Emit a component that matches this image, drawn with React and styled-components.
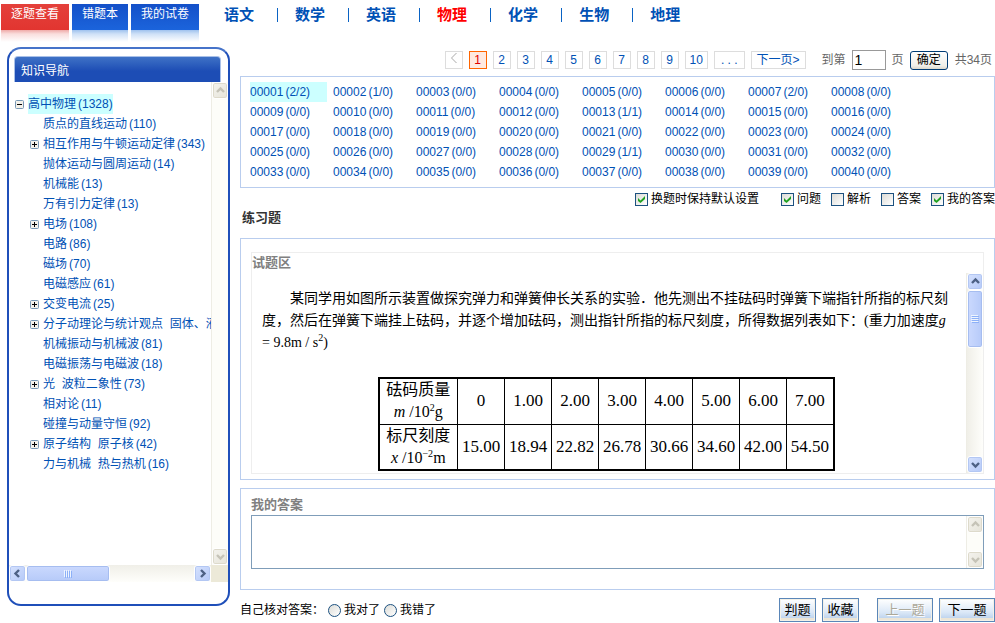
import { useState } from 'react';
import styled, { createGlobalStyle, css } from 'styled-components';

const GlobalStyle = createGlobalStyle`
  * {
    box-sizing: border-box;
  }

  body {
    margin: 0;
    background: #fff;
    color: #000;
    font-family: 'Liberation Sans', 'Noto Sans CJK SC', sans-serif;
    font-size: 12px;
    line-height: 20px;
  }

  a {
    color: #0051b5;
    text-decoration: none;
  }

  button, input, textarea {
    margin: 0;
    font: inherit;
  }
`;

const Header = styled.header`
  display: flex;
  height: 47px;
  padding: 4px 0 0 1px;
`;

const Tabs = styled.nav`
  display: flex;
  gap: 3px;
`;

const Tab = styled.a`
  height: 38px;
  padding: 0 10px;
  color: #fff;
  line-height: 20px;
  white-space: nowrap;
  background: ${props =>
    props.$active
      ? 'linear-gradient(#e4403b, #e23530 26px, #efaaa8 26px, #f9dedd 30px, #fff)'
      : 'linear-gradient(#1450c8, #1b64dc 26px, #9fc2ee 26px, #cfe1f7 30px, #fff)'};
`;

const Subjects = styled.ul`
  display: flex;
  gap: 17px;
  margin: 4px 0 0 25px;
  padding: 0;
  list-style: none;
`;

const Subject = styled.li`
  height: 14px;
  padding-right: 23px;
  border-right: 1px solid #0a63c4;
  font-size: 15px;
  font-weight: bold;
  line-height: 14px;

  &:last-child {
    border-right: 0;
  }

  a {
    color: ${props => (props.$active ? '#f00' : '#0051b5')};
  }
`;

const Body = styled.div`
  display: flex;
  align-items: flex-start;
  gap: 10px;
  padding-left: 7px;
`;

const Sidebar = styled.aside`
  flex: 0 0 223px;
  padding: 7px 0 22px;
  border: 2px solid #1f4fb9;
  border-top-color: #4673c9;
  border-radius: 14px;
`;

const SidebarTitle = styled.h2`
  height: 26px;
  margin: 0 7px 0 5px;
  padding: 4px 0 0 6px;
  border: 1px solid #a9c0e8;
  border-width: 1px 1px 0;
  border-radius: 4px 4px 0 0;
  background: linear-gradient(#3f72c6, #1d4db5 14px);
  color: #fff;
  font-size: 12px;
  font-weight: normal;
`;

const TreePane = styled.div`
  display: grid;
  grid-template-columns: minmax(0, 1fr) 17px;
  grid-template-rows: 483px 17px;
`;

const Corner = styled.div`
  background: #ece9d8;
`;

const Tree = styled.ul`
  margin: 0;
  padding: 12px 0 0 6px;
  overflow: hidden;
  list-style: none;
  white-space: pre;
`;

const Node = styled.li`
  display: flex;
  align-items: center;
  height: 20px;
  padding-left: ${props => (props.$root ? 0 : 15)}px;
`;

const NodeLink = styled.a`
  margin-left: ${props => (props.$indent ? 13 : 4)}px;
  background: ${props => (props.$current ? '#cff' : 'none')};
`;

const Toggle = styled.button`
  display: flex;
  flex: none;
  width: 9px;
  height: 9px;
  padding: 0;
  border: 0;
  background: none;
`;

const Count = styled.span`
  margin-left: 2px;
`;

const Track = styled.div`
  display: flex;
  flex: none;
  ${props =>
    props.$horizontal
      ? css`
          height: 17px;
          background: linear-gradient(#f0efe8, #fefefb);
        `
      : css`
          flex-direction: column;
          width: 17px;
          border-left: 1px solid #eeede5;
          background: ${props.$disabled ? '#fdfdf9' : 'linear-gradient(90deg, #f0efe8, #fefefb)'};
        `}
`;

const ArrowButton = styled.button`
  display: flex;
  flex: none;
  align-items: center;
  justify-content: center;
  width: ${props => (props.$horizontal ? 17 : 16)}px;
  height: 17px;
  padding: 0;
  border: 1px solid #fff;
  border-radius: 3px;
  background: linear-gradient(135deg, #d6e2fe, #b5c9f8);
  box-shadow: inset 0 0 0 1px #b3c7f3;
  color: #4d6185;

  &:disabled {
    background: linear-gradient(135deg, #f4f3ee, #e6e4d9);
    box-shadow: inset 0 0 0 1px #dddacb;
    color: #c5c3b7;
  }

  &:last-child {
    margin: ${props => (props.$horizontal ? '0 0 0 auto' : 'auto 0 0')};
  }
`;

const Thumb = styled.div`
  display: flex;
  align-items: center;
  justify-content: center;
  width: ${props => (props.$horizontal ? 84 : 16)}px;
  height: ${props => (props.$horizontal ? 17 : 58)}px;
  border: 1px solid #fff;
  border-radius: 3px;
  background: linear-gradient(${props => (props.$horizontal ? '180deg' : '90deg')}, #cbd9fe, #b6caf9);
  box-shadow: inset 0 0 0 1px #a6bdf0;
`;

const Main = styled.main`
  flex: 1;
  min-width: 0;
`;

const Pager = styled.form`
  display: flex;
  align-items: center;
  justify-content: flex-end;
  gap: 6px;
  height: 26px;
  margin-bottom: 3px;
  padding-right: 3px;
  color: #666;
  white-space: nowrap;
`;

const PageLink = styled.a`
  min-width: 18px;
  height: 18px;
  padding: 0 ${props => (props.$wide ? 6 : 4)}px;
  border: 1px solid ${props => (props.$current ? '#ff6500' : '#ddd')};
  background: ${props => (props.$current ? '#ffeae1' : '#fff')};
  color: ${props => (props.$current ? '#e00000' : '#0051b5')};
  line-height: 16px;
  text-align: center;
`;

const PrevLink = styled(PageLink)`
  color: #aaa;
`;

const NextLink = styled(PageLink)`
  padding: 0 5px;
`;

const Jump = styled.label`
  display: flex;
  align-items: center;
  gap: 6px;
  margin-left: 10px;
`;

const PageInput = styled.input`
  width: 34px;
  height: 20px;
  padding: 0 2px;
  border: 1px solid #999;
  font-size: 14px;
`;

const GoButton = styled.button`
  height: 19px;
  padding: 0 6px;
  border: 1px solid #003c74;
  border-radius: 3px;
  background: linear-gradient(#fff, #f0efe9 80%, #dcd8cc);
  color: #000;
  line-height: 16px;
`;

const Total = styled.span`
  margin-left: 1px;
`;

const Panel = styled.section`
  border: 1px solid #b9cdee;
`;

const NumberPanel = styled(Panel)`
  display: grid;
  grid-template-columns: repeat(auto-fill, 83px);
  padding: 5px 9px;
`;

const NumberLink = styled.a`
  width: 77px;
  background: ${props => (props.$current ? '#cff' : 'none')};
`;

const Options = styled.div`
  display: flex;
  align-items: center;
  justify-content: flex-end;
  gap: 10px;
  height: 22px;
`;

const Option = styled.label`
  display: flex;
  align-items: center;
  gap: 3px;
  white-space: nowrap;
`;

const Remember = styled(Option)`
  margin-right: 12px;
`;

const Check = styled.input`
  appearance: none;
  width: 13px;
  height: 13px;
  border: 1px solid #1c5180;
  background: linear-gradient(135deg, #dcdcd7, #fff);

  &:checked {
    background:
      url("data:image/svg+xml,%3Csvg xmlns='http://www.w3.org/2000/svg' width='7' height='7'%3E%3Cpath d='M0 2l2.500 2.500L7 0v3L2.500 7 0 5z' fill='%2321a121'/%3E%3C/svg%3E")
        center no-repeat,
      linear-gradient(135deg, #dcdcd7, #fff);
  }
`;

const Radio = styled.input`
  appearance: none;
  width: 13px;
  height: 13px;
  border: 1px solid #1c5180;
  border-radius: 50%;
  background: linear-gradient(135deg, #dcdcd7, #fff);

  &:checked {
    background: radial-gradient(#21a121 3px, #fff 3px);
  }
`;

const Heading = styled.h1`
  margin: 0 0 12px 2px;
  color: #333;
  font-size: 13px;
  line-height: 16px;
`;

const QuestionPanel = styled(Panel)`
  margin-bottom: 8px;
  padding: 13px 10px 5px;
`;

const QuestionBox = styled.div`
  border: 1px solid #eee;
`;

const PanelTitle = styled.h2`
  display: block;
  margin: 0;
  color: #808080;
  font-size: 13px;
  font-weight: bold;
  line-height: 20px;
`;

const ScrollPane = styled.div`
  display: flex;
  height: 200px;
`;

const Question = styled.div`
  flex: 1;
  padding: 15px 16px 0 10px;
  overflow: hidden;
  font-family: 'Liberation Serif', 'Noto Sans CJK SC', serif;
  font-size: 14px;
  line-height: 22px;

  p {
    margin: 0 0 23px;
    text-indent: 2em;
  }

  sup {
    font-size: 10px;
    line-height: 0;
  }
`;

const DataTable = styled.table`
  margin: 0 auto;
  border: 2px solid #000;
  border-collapse: collapse;
  font-size: 17px;
  text-align: center;

  th, td {
    width: 47px;
    height: 46px;
    padding: 0;
    border: 1px solid #000;
    font-weight: normal;
  }

  th {
    width: 79px;
    font-size: 16px;
  }
`;

const AnswerPanel = styled(Panel)`
  padding: 6px 10px 20px;
`;

const AnswerBox = styled.div`
  display: flex;
  height: 54px;
  border: 1px solid #7f9db9;
`;

const AnswerInput = styled.textarea`
  flex: 1;
  padding: 2px;
  border: 0;
  outline: 0;
  resize: none;
`;

const Footer = styled.footer`
  display: flex;
  align-items: center;
  gap: 6px;
  margin-top: 8px;
`;

const SelfCheck = styled.fieldset`
  display: flex;
  flex: 1;
  align-items: center;
  gap: 4px;
  margin: 0;
  padding: 0;
  border: 0;
`;

const ActionButton = styled.button`
  min-width: ${props => (props.$wide ? 56 : 37)}px;
  height: 24px;
  padding: 0 4px;
  border: 1px solid #5a86b8;
  background: linear-gradient(#fff, #dbe8f7 60%, #c0d5ee 19px, #ece5d6 19px);
  box-shadow: inset 0 0 0 1px #f3f1e8;
  color: #000;
  font-size: 13px;
  line-height: 18px;

  &:disabled {
    color: #aca899;
    text-shadow: 1px 1px #fff;
  }
`;

const ButtonGroup = styled.div`
  display: flex;
  gap: 6px;
  margin-right: 12px;
`;

const subjects = ['语文', '数学', '英语', '物理', '化学', '生物', '地理'];

const chapters = [
  { title: '质点的直线运动', count: 110 },
  { title: '相互作用与牛顿运动定律', count: 343, children: true },
  { title: '抛体运动与圆周运动', count: 14 },
  { title: '机械能', count: 13 },
  { title: '万有引力定律', count: 13 },
  { title: '电场', count: 108, children: true },
  { title: '电路', count: 86 },
  { title: '磁场', count: 70 },
  { title: '电磁感应', count: 61 },
  { title: '交变电流', count: 25, children: true },
  { title: '分子动理论与统计观点  固体、液', children: true },
  { title: '机械振动与机械波', count: 81 },
  { title: '电磁振荡与电磁波', count: 18 },
  { title: '光  波粒二象性', count: 73, children: true },
  { title: '相对论', count: 11 },
  { title: '碰撞与动量守恒', count: 92 },
  { title: '原子结构  原子核', count: 42, children: true },
  { title: '力与机械  热与热机', count: 16 },
];

const scores = { 1: '2/2', 2: '1/0', 7: '2/0', 13: '1/1', 29: '1/1' };

const questions = Array.from({ length: 40 }, (_, i) => ({
  number: String(i + 1).padStart(5, '0'),
  score: scores[i + 1] || '0/0',
}));

const masses = ['0', '1.00', '2.00', '3.00', '4.00', '5.00', '6.00', '7.00'];
const readings = ['15.00', '18.94', '22.82', '26.78', '30.66', '34.60', '42.00', '54.50'];

const arrows = {
  up: 'M1 6l3.500-3.500L8 6',
  down: 'M1 3l3.500 3.500L8 3',
  left: 'M6 1L2.500 4.500 6 8',
  right: 'M3 1l3.500 3.500L3 8',
};

function Arrow({ direction, disabled, horizontal, label }) {
  return (
    <ArrowButton type="button" disabled={disabled} $horizontal={horizontal} aria-label={label}>
      <svg width="9" height="9" viewBox="0 0 9 9">
        <path d={arrows[direction]} fill="none" stroke="currentColor" strokeWidth="2.4" />
      </svg>
    </ArrowButton>
  );
}

function ScrollBar({ horizontal, disabled }) {
  return (
    <Track $horizontal={horizontal} $disabled={disabled}>
      <Arrow
        direction={horizontal ? 'left' : 'up'}
        horizontal={horizontal}
        disabled={disabled}
        label={horizontal ? '向左' : '向上'}
      />
      {!disabled && (
        <Thumb $horizontal={horizontal}>
          <svg width="8" height="8" viewBox="0 0 8 8">
            <path
              d={horizontal ? 'M.5 0v7M2.500 0v7M4.500 0v7M6.500 0v7' : 'M0 .5h7M0 2.500h7M0 4.500h7M0 6.500h7'}
              stroke="#eef4fe"
            />
            <path
              d={horizontal ? 'M1.500 1v7M3.500 1v7M5.500 1v7M7.500 1v7' : 'M1 1.500h7M1 3.500h7M1 5.500h7M1 7.500h7'}
              stroke="#8cb0f8"
            />
          </svg>
        </Thumb>
      )}
      <Arrow
        direction={horizontal ? 'right' : 'down'}
        horizontal={horizontal}
        disabled={disabled}
        label={horizontal ? '向右' : '向下'}
      />
    </Track>
  );
}

function TreeToggle({ open }) {
  return (
    <Toggle type="button" aria-label={open ? '收起' : '展开'}>
      <svg width="9" height="9" viewBox="0 0 9 9">
        <rect x="0.5" y="0.5" width="8" height="8" rx="1" fill="#f3f1ea" stroke="#7898b5" />
        <path d={open ? 'M2 4.500h5' : 'M2 4.500h5M4.500 2v5'} stroke="#000" />
      </svg>
    </Toggle>
  );
}

function KnowledgeTree() {
  return (
    <Sidebar>
      <SidebarTitle>知识导航</SidebarTitle>
      <TreePane>
        <Tree>
          <Node $root>
            <TreeToggle open />
            <NodeLink href="#" $current>
              高中物理<Count>(1328)</Count>
            </NodeLink>
          </Node>
          {chapters.map(({ title, count, children }) => (
            <Node key={title}>
              {children && <TreeToggle />}
              <NodeLink href="#" $indent={!children}>
                {title}
                {count && <Count>({count})</Count>}
              </NodeLink>
            </Node>
          ))}
        </Tree>
        <ScrollBar disabled />
        <ScrollBar horizontal />
        <Corner />
      </TreePane>
    </Sidebar>
  );
}

function Pagination() {
  const [page, setPage] = useState('1');

  return (
    <Pager onSubmit={e => e.preventDefault()}>
      <PrevLink href="#" aria-label="上一页">
        <svg width="8" height="12" viewBox="0 0 8 12">
          <path d="M6.500 1L1.500 6l5 5" fill="none" stroke="currentColor" />
        </svg>
      </PrevLink>
      {[1, 2, 3, 4, 5, 6, 7, 8, 9, 10].map(n => (
        <PageLink key={n} href="#" $current={n === 1}>
          {n}
        </PageLink>
      ))}
      <PageLink href="#" $wide>
        . . .
      </PageLink>
      <NextLink href="#">
        下一页&gt;
      </NextLink>
      <Jump>
        到第
        <PageInput value={page} onChange={e => setPage(e.target.value)} />
        页
      </Jump>
      <GoButton type="submit">确定</GoButton>
      <Total>共34页</Total>
    </Pager>
  );
}

function QuestionArea() {
  return (
    <QuestionPanel>
      <QuestionBox>
        <PanelTitle>试题区</PanelTitle>
        <ScrollPane>
          <Question>
            <p>
              某同学用如图所示装置做探究弹力和弹簧伸长关系的实验．他先测出不挂砝码时弹簧下端指针所指的标尺刻度，然后在弹簧下端挂上砝码，并逐个增加砝码，测出指针所指的标尺刻度，所得数据列表如下：(重力加速度<i>g</i>{' '}
              = 9.8m / s<sup>2</sup>)
            </p>
            <DataTable>
              <tbody>
                <tr>
                  <th scope="row">
                    砝码质量
                    <br />
                    <i>m</i> /10<sup>2</sup>g
                  </th>
                  {masses.map(mass => (
                    <td key={mass}>{mass}</td>
                  ))}
                </tr>
                <tr>
                  <th scope="row">
                    标尺刻度
                    <br />
                    <i>x</i> /10<sup>−2</sup>m
                  </th>
                  {readings.map(reading => (
                    <td key={reading}>{reading}</td>
                  ))}
                </tr>
              </tbody>
            </DataTable>
          </Question>
          <ScrollBar />
        </ScrollPane>
      </QuestionBox>
    </QuestionPanel>
  );
}

function App() {
  return (
    <>
      <GlobalStyle />
      <Header>
        <Tabs>
          <Tab href="#" $active>
            逐题查看
          </Tab>
          <Tab href="#">错题本</Tab>
          <Tab href="#">我的试卷</Tab>
        </Tabs>
        <Subjects>
          {subjects.map(name => (
            <Subject key={name} $active={name === '物理'}>
              <a href="#">{name}</a>
            </Subject>
          ))}
        </Subjects>
      </Header>
      <Body>
        <KnowledgeTree />
        <Main>
          <Pagination />
          <NumberPanel>
            {questions.map(({ number, score }, i) => (
              <NumberLink key={number} href="#" $current={i === 0}>
                {number}
                <Count>({score})</Count>
              </NumberLink>
            ))}
          </NumberPanel>
          <Options>
            <Remember>
              <Check type="checkbox" defaultChecked />
              换题时保持默认设置
            </Remember>
            <Option>
              <Check type="checkbox" defaultChecked />
              问题
            </Option>
            <Option>
              <Check type="checkbox" />
              解析
            </Option>
            <Option>
              <Check type="checkbox" />
              答案
            </Option>
            <Option>
              <Check type="checkbox" defaultChecked />
              我的答案
            </Option>
          </Options>
          <Heading>练习题</Heading>
          <QuestionArea />
          <AnswerPanel>
            <PanelTitle as="label" htmlFor="answer">
              我的答案
            </PanelTitle>
            <AnswerBox>
              <AnswerInput id="answer" />
              <ScrollBar disabled />
            </AnswerBox>
          </AnswerPanel>
          <Footer>
            <SelfCheck>
              自己核对答案：
              <Option>
                <Radio type="radio" name="self" />
                我对了
              </Option>
              <Option>
                <Radio type="radio" name="self" />
                我错了
              </Option>
            </SelfCheck>
            <ButtonGroup>
              <ActionButton type="button">判题</ActionButton>
              <ActionButton type="button">收藏</ActionButton>
            </ButtonGroup>
            <ActionButton type="button" $wide disabled>
              上一题
            </ActionButton>
            <ActionButton type="button" $wide>
              下一题
            </ActionButton>
          </Footer>
        </Main>
      </Body>
    </>
  );
}

export default App;
